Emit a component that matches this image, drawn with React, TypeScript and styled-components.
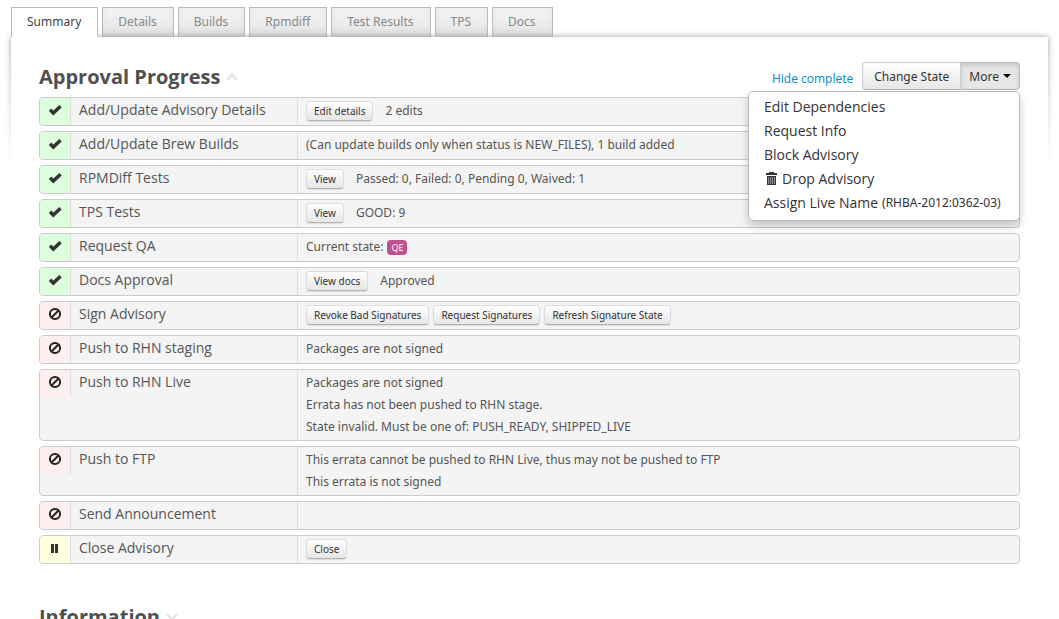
import React from 'react';
import styled, { createGlobalStyle, css } from 'styled-components';

const heading = '"Open Sans", "Noto Sans", sans-serif';

const GlobalStyle = createGlobalStyle`
  *, *::before, *::after { box-sizing: border-box; }
  body {
    margin: 0;
    background: #fff;
    color: #555;
    font-family: "Noto Sans", "Open Sans", sans-serif;
    font-size: 12px;
    line-height: 22px;
  }
  button { font-family: inherit; cursor: pointer; }
`;

const Page = styled.div`
  display: flex;
  flex-direction: column;
  height: 100vh;
  overflow: hidden;
  padding: 7px 11px 0;
`;

const Tabs = styled.nav`
  display: flex;
  flex: none;
  gap: 4px;
`;

const Tab = styled.a<{ $active?: boolean }>`
  height: 30px;
  padding: 0 16px 0 15px;
  border: 1px solid #bbb;
  border-bottom: 0;
  line-height: 28px;
  text-decoration: none;
  white-space: nowrap;
  color: #888;
  background: linear-gradient(#f2f2f2, #e8e8e8);
  box-shadow: inset 0 -8px 12px -6px #ccc;
  ${p => p.$active && css`
    position: relative;
    z-index: 1;
    color: #444;
    background: #fff;
    box-shadow: none;
  `}
`;

const Panel = styled.main`
  position: relative;
  z-index: 0;
  flex: 1 0 auto;
  padding: 25px 28px 0;

  &::before {
    content: '';
    position: absolute;
    z-index: -2;
    inset: 0;
    box-shadow: 0 0 6px #999;
  }

  &::after {
    content: '';
    position: absolute;
    z-index: -1;
    inset: 0 -10px;
    background: linear-gradient(rgba(255, 255, 255, 0), #fff 130px);
  }
`;

const SectionHeader = styled.header`
  display: flex;
  align-items: center;
  height: 28px;
  margin-bottom: 7px;
`;

const Title = styled.h2`
  display: flex;
  align-items: center;
  gap: 6px;
  flex: 1;
  margin: 0;
  padding-top: 2px;
  font-family: ${heading};
  font-size: 20px;
  line-height: 28px;
  font-weight: 700;
  color: #505050;
`;

const HideLink = styled.a`
  margin-right: 9px;
  padding-top: 6px;
  font-family: ${heading};
  color: #08c;
  text-decoration: none;
`;

const ButtonGroup = styled.div`
  position: relative;
  display: flex;
`;

const GroupButton = styled.button<{ $open?: boolean }>`
  display: flex;
  align-items: center;
  gap: 4px;
  height: 28px;
  padding: 0 11px;
  border: 1px solid #ccc;
  border-bottom-color: #b3b3b3;
  border-radius: 4px 0 0 4px;
  font-size: 12px;
  color: #333;
  background: linear-gradient(#fff, #e6e6e6);
  ${p => p.$open && css`
    padding: 0 8px;
    border-color: #bbb;
    border-left: 0;
    border-radius: 0 4px 4px 0;
    background: #e6e6e6;
    box-shadow: inset 0 2px 4px rgba(0, 0, 0, 0.15);
  `}
`;

const Menu = styled.ul`
  position: absolute;
  z-index: 2;
  top: 100%;
  right: 0;
  margin: 1px 0 0;
  padding: 3px 0 5px;
  min-width: 272px;
  list-style: none;
  background: #fff;
  border: 1px solid #bbb;
  border-radius: 5px;
  box-shadow: 0 5px 10px rgba(0, 0, 0, 0.2);
`;

const MenuLink = styled.a`
  display: flex;
  align-items: center;
  gap: 4px;
  height: 24px;
  padding: 0 15px;
  font-family: ${heading};
  font-size: 14px;
  white-space: nowrap;
  text-decoration: none;
  color: #333;
  small {
    font-family: "Noto Sans", sans-serif;
    font-size: 12px;
  }
`;

const Steps = styled.ol`
  display: flex;
  flex-direction: column;
  gap: 5px;
  margin: 0 0 38px;
  padding: 0;
  list-style: none;
`;

const Step = styled.li`
  display: grid;
  grid-template-columns: 31px 227px 1fr;
  min-height: 29px;
  border: 1px solid #ccc;
  border-radius: 4px;
  background: #f4f4f4;
  overflow: hidden;
`;

type State = 'done' | 'blocked' | 'waiting';
const stateColor: Record<State, string> = { done: '#dfd', blocked: '#fee', waiting: '#ffd' };

const StatusCell = styled.div<{ $state: State }>`
  display: flex;
  justify-content: center;
  height: 27px;
  padding-top: 5px;
  border-right: 1px solid #ddd;
  background: ${p => stateColor[p.$state]};
`;

const StepName = styled.div`
  padding: 1px 8px 0;
  border-right: 1px solid #ddd;
  font-family: ${heading};
  font-size: 14px;
`;

const StepBody = styled.div`
  display: flex;
  align-items: center;
  gap: 4px;
  padding: 0 8px 1px;
`;

const Lines = styled.div`
  padding: 2px 0 1px;
`;

const Line = styled.p`
  margin: 0;
`;

const Note = styled.span<{ $after?: boolean }>`
  margin-left: ${p => (p.$after ? 8 : 0)}px;
`;

const SmallButton = styled.button`
  height: 20px;
  padding: 0 7px;
  border: 1px solid #ddd;
  border-bottom-color: #b3b3b3;
  border-radius: 4px;
  font-size: 10px;
  line-height: 16px;
  white-space: nowrap;
  color: #333;
  background: linear-gradient(#fff, #e6e6e6);
  box-shadow: 0 1px 1px rgba(0, 0, 0, 0.1);
`;

const Badge = styled.span`
  padding: 0 4px;
  border-radius: 4px;
  font-size: 9px;
  line-height: 15px;
  color: #fff;
  background: #c05090;
`;

const Chevron = ({ down }: { down?: boolean }) => (
  <svg width="12" height="8" viewBox="0 0 12 8" fill="none" stroke="#e6e6e6" strokeWidth="3" aria-hidden="true">
    <path d={down ? 'M1.2 1.5 6 6 10.8 1.5' : 'M1.2 6.5 6 2 10.8 6.5'} />
  </svg>
);

const Caret = () => (
  <svg width="8" height="4" viewBox="0 0 8 4" aria-hidden="true">
    <path d="M0 0h8L4 4z" fill="#000" />
  </svg>
);

const TrashIcon = () => (
  <svg width="14" height="14" viewBox="0 0 14 14" fill="#333" aria-hidden="true">
    <path fillRule="evenodd" d="M5 0h5v1h3v2H2V1h3zM6 1h3zM3 4h9v9H3zM4.600 5v7h.5V5zM6.600 5v7h.5V5zM8.400 5v7h.5V5zM10.200 5v7h.5V5z" />
  </svg>
);

const StatusIcon = ({ state }: { state: State }) => (
  <svg width="14" height="14" viewBox="0 0 14 14" role="img" aria-label={state}>
    {state === 'done' && <path d="M2 6.800 5.300 10 12.500 3.200" fill="none" stroke="#333" strokeWidth="3.500" />}
    {state === 'blocked' && (
      <g fill="none" stroke="#222" strokeWidth="2">
        <circle cx="7" cy="7" r="5.100" />
        <path d="M3.500 10.500 10.500 3.500" />
      </g>
    )}
    {state === 'waiting' && <path d="M3 3h3v9H3zM7 3h3v9H7z" fill="#333" />}
  </svg>
);

interface StepData {
  name: string;
  state: State;
  buttons?: string[];
  lines?: string[];
  badge?: string;
}

const steps: StepData[] = [
  { name: 'Add/Update Advisory Details', state: 'done', buttons: ['Edit details'], lines: ['2 edits'] },
  { name: 'Add/Update Brew Builds', state: 'done', lines: ['(Can update builds only when status is NEW_FILES), 1 build added'] },
  { name: 'RPMDiff Tests', state: 'done', buttons: ['View'], lines: ['Passed: 0, Failed: 0, Pending 0, Waived: 1'] },
  { name: 'TPS Tests', state: 'done', buttons: ['View'], lines: ['GOOD: 9'] },
  { name: 'Request QA', state: 'done', lines: ['Current state:'], badge: 'QE' },
  { name: 'Docs Approval', state: 'done', buttons: ['View docs'], lines: ['Approved'] },
  { name: 'Sign Advisory', state: 'blocked', buttons: ['Revoke Bad Signatures', 'Request Signatures', 'Refresh Signature State'] },
  { name: 'Push to RHN staging', state: 'blocked', lines: ['Packages are not signed'] },
  {
    name: 'Push to RHN Live',
    state: 'blocked',
    lines: [
      'Packages are not signed',
      'Errata has not been pushed to RHN stage.',
      'State invalid. Must be one of: PUSH_READY, SHIPPED_LIVE',
    ],
  },
  {
    name: 'Push to FTP',
    state: 'blocked',
    lines: ['This errata cannot be pushed to RHN Live, thus may not be pushed to FTP', 'This errata is not signed'],
  },
  { name: 'Send Announcement', state: 'blocked' },
  { name: 'Close Advisory', state: 'waiting', buttons: ['Close'] },
];

const tabs = ['Summary', 'Details', 'Builds', 'Rpmdiff', 'Test Results', 'TPS', 'Docs'];

const StepRow = ({ step }: { step: StepData }) => {
  const { name, state, buttons = [], lines = [], badge } = step;
  return (
    <Step>
      <StatusCell $state={state}><StatusIcon state={state} /></StatusCell>
      <StepName>{name}</StepName>
      <StepBody>
        {buttons.map(label => <SmallButton key={label} type="button">{label}</SmallButton>)}
        {lines.length === 1 && <Note $after={buttons.length > 0}>{lines[0]}</Note>}
        {lines.length > 1 && <Lines>{lines.map(line => <Line key={line}>{line}</Line>)}</Lines>}
        {badge && <Badge>{badge}</Badge>}
      </StepBody>
    </Step>
  );
};

export default function App() {
  return (
    <>
      <GlobalStyle />
      <Page>
        <Tabs>
          {tabs.map((tab, i) => <Tab key={tab} href="#" $active={i === 0}>{tab}</Tab>)}
        </Tabs>
        <Panel>
          <SectionHeader>
            <Title>Approval Progress <Chevron /></Title>
            <HideLink href="#">Hide complete</HideLink>
            <ButtonGroup>
              <GroupButton type="button">Change State</GroupButton>
              <GroupButton type="button" $open aria-expanded="true">More <Caret /></GroupButton>
              <Menu>
                <li><MenuLink href="#">Edit Dependencies</MenuLink></li>
                <li><MenuLink href="#">Request Info</MenuLink></li>
                <li><MenuLink href="#">Block Advisory</MenuLink></li>
                <li><MenuLink href="#"><TrashIcon />Drop Advisory</MenuLink></li>
                <li><MenuLink href="#">Assign Live Name <small>(RHBA-2012:0362-03)</small></MenuLink></li>
              </Menu>
            </ButtonGroup>
          </SectionHeader>
          <Steps>
            {steps.map(step => <StepRow key={step.name} step={step} />)}
          </Steps>
          <SectionHeader>
            <Title>Information <Chevron down /></Title>
          </SectionHeader>
        </Panel>
      </Page>
    </>
  );
}
